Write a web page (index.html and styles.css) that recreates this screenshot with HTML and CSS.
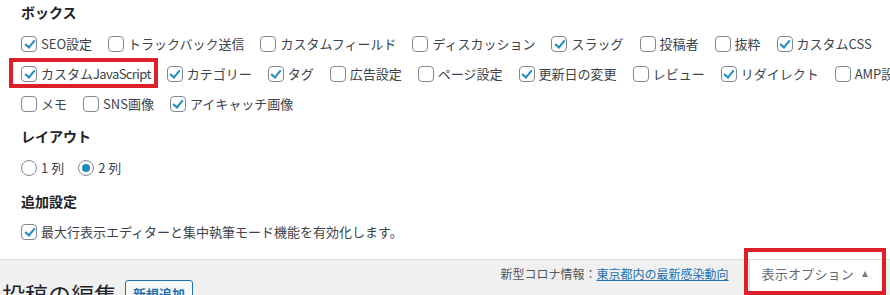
FILE: index.html
```html
<!DOCTYPE html>
<html lang="ja">
<head>
<meta charset="utf-8">
<title>表示オプション</title>
<link rel="stylesheet" href="styles.css">
</head>
<body>
<div class="screen-meta">
  <section class="pref-group">
    <h2 class="pref-title">ボックス</h2>
    <div class="pref-row">
      <label class="pref"><input type="checkbox" checked>SEO設定</label>
      <label class="pref"><input type="checkbox">トラックバック送信</label>
      <label class="pref"><input type="checkbox">カスタムフィールド</label>
      <label class="pref"><input type="checkbox">ディスカッション</label>
      <label class="pref"><input type="checkbox" checked>スラッグ</label>
      <label class="pref"><input type="checkbox">投稿者</label>
      <label class="pref"><input type="checkbox">抜粋</label>
      <label class="pref"><input type="checkbox" checked>カスタムCSS</label>
    </div>
    <div class="pref-row">
      <label class="pref is-marked"><input type="checkbox" checked>カスタム<span class="tight">JavaScript</span></label>
      <label class="pref"><input type="checkbox" checked>カテゴリー</label>
      <label class="pref"><input type="checkbox" checked>タグ</label>
      <label class="pref"><input type="checkbox">広告設定</label>
      <label class="pref"><input type="checkbox">ページ設定</label>
      <label class="pref"><input type="checkbox" checked>更新日の変更</label>
      <label class="pref"><input type="checkbox">レビュー</label>
      <label class="pref"><input type="checkbox" checked>リダイレクト</label>
      <label class="pref"><input type="checkbox">AMP設定</label>
    </div>
    <div class="pref-row">
      <label class="pref"><input type="checkbox">メモ</label>
      <label class="pref"><input type="checkbox">SNS画像</label>
      <label class="pref"><input type="checkbox" checked>アイキャッチ画像</label>
    </div>
  </section>
  <section class="pref-group">
    <h2 class="pref-title">レイアウト</h2>
    <div class="pref-row">
      <label class="pref pref-radio"><input type="radio" name="cols">1 列</label>
      <label class="pref pref-radio"><input type="radio" name="cols" checked>2 列</label>
    </div>
  </section>
  <section class="pref-group pref-group-extra">
    <h2 class="pref-title">追加設定</h2>
    <div class="pref-row">
      <label class="pref"><input type="checkbox" checked>最大行表示エディターと集中執筆モード機能を有効化します。</label>
    </div>
  </section>
</div>
<div class="wp-body">
  <div class="title-row">
    <h1 class="page-title">投稿の編集</h1>
    <a class="title-action" href="#">新規追加</a>
  </div>
  <div class="meta-links">
    <p class="notice">新型コロナ情報：<a href="#">東京都内の最新感染動向</a></p>
    <button class="meta-toggle" type="button"><span class="toggle-label">表示オプション</span><span class="caret"></span></button>
  </div>
</div>
</body>
</html>
```

FILE: styles.css
```css
html, body {
  margin: 0;
  padding: 0;
  overflow: hidden;
  background: #fff;
}

body {
  font-family: "Noto Sans CJK JP", "Noto Sans", sans-serif;
  font-size: 13px;
  color: #3c434a;
}

.screen-meta {
  background: #fff;
  padding: 2px 0 12px 21px;
  border-bottom: 1px solid #dcdcde;
  display: flex;
  flex-direction: column;
  gap: 7px;
}

.pref-group-extra {
  margin-top: 1px;
}

.pref-title {
  margin: 0 0 7px;
  font-size: 14px;
  line-height: 20px;
  font-weight: 700;
  color: #1d2327;
}

.pref-group-extra .pref-title {
  margin-bottom: 6px;
}

.pref-row {
  display: flex;
  flex-wrap: nowrap;
  white-space: nowrap;
}

.pref {
  position: relative;
  flex-shrink: 0;
  display: flex;
  align-items: center;
  height: 30px;
  padding-right: 16px;
  line-height: 30px;
}

.tight {
  letter-spacing: -0.6px;
}

.pref input {
  appearance: none;
  -webkit-appearance: none;
  position: relative;
  flex-shrink: 0;
  width: 16px;
  height: 16px;
  margin: 0 4px 0 0;
  border: 1px solid #7e8993;
  border-radius: 4px;
  background: #fff;
  box-sizing: border-box;
}

.pref input[type="checkbox"]:checked::before {
  content: "";
  position: absolute;
  left: 4.5px;
  top: 1px;
  width: 4px;
  height: 8px;
  border: solid #1e8cbe;
  border-width: 0 2.5px 2.5px 0;
  transform: rotate(40deg);
}

.pref-radio input {
  border-radius: 50%;
}

.pref-radio {
  padding-right: 14px;
}

.pref-radio input:checked::before {
  content: "";
  position: absolute;
  left: 3px;
  top: 3px;
  width: 8px;
  height: 8px;
  border-radius: 50%;
  background: #1e8cbe;
}

.is-marked::after {
  content: "";
  position: absolute;
  left: -12px;
  right: 9px;
  top: -1px;
  bottom: 1px;
  border: 4px solid #dd1f2a;
}

.wp-body {
  background: #f0f0f1;
  min-height: 80px;
  display: flex;
  justify-content: space-between;
  align-items: flex-start;
}

.title-row {
  display: flex;
  align-items: flex-start;
  padding-left: 2px;
}

.page-title {
  margin: 19px 0 0;
  font-size: 23px;
  line-height: 30px;
  font-weight: 400;
  color: #1d2327;
}

.title-action {
  margin: 20px 0 0 8px;
  padding: 3px 7px;
  border: 1px solid #2271b1;
  border-radius: 3px;
  background: #f6f7f7;
  color: #2271b1;
  font-size: 13px;
  line-height: 20px;
  font-weight: 700;
  text-decoration: none;
}

.meta-links {
  display: flex;
  align-items: flex-start;
  margin-right: 6px;
}

.notice {
  margin: 0 20px 0 0;
  padding-top: 5px;
  font-size: 12px;
  line-height: 18px;
  color: #50575e;
}

.notice a {
  color: #2271b1;
  text-decoration: underline;
}

.meta-toggle {
  position: relative;
  display: flex;
  align-items: center;
  background: #fff;
  border: 1px solid #dcdcde;
  border-top: none;
  padding: 3px 15px 6px 12px;
  font-family: inherit;
  font-size: 13px;
  line-height: 22px;
  color: #646970;
}

.toggle-label {
  letter-spacing: 0.2px;
}

.caret {
  display: inline-block;
  width: 0;
  height: 0;
  margin-left: 8px;
  border-left: 3.5px solid transparent;
  border-right: 3.5px solid transparent;
  border-bottom: 6px solid #787c82;
}

.meta-toggle::after {
  content: "";
  position: absolute;
  left: -6px;
  right: -3px;
  top: -12px;
  bottom: -4px;
  border: 4px solid #dd1f2a;
}
```
